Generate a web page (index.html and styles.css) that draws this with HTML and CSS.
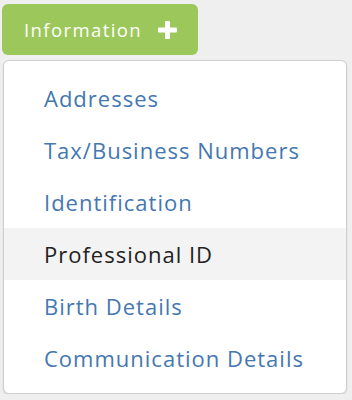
FILE: index.html
```html
<!DOCTYPE html>
<html lang="en">
<head>
  <meta charset="UTF-8" />
  <title>Information menu</title>
  <link rel="stylesheet" href="styles.css">
</head>
<body>
  <div class="dropdown">
    <button class="toggle">
      Information
      <svg class="plus" width="19" height="18" viewBox="0 0 19 18">
        <rect x="7" y="0" width="5" height="18" rx="1" fill="#fff" />
        <rect x="0" y="6.5" width="19" height="5" rx="1" fill="#fff" />
      </svg>
    </button>
    <ul class="menu">
      <li><a href="#">Addresses</a></li>
      <li><a href="#">Tax/Business Numbers</a></li>
      <li><a href="#">Identification</a></li>
      <li class="active"><a href="#">Professional ID</a></li>
      <li><a href="#">Birth Details</a></li>
      <li><a href="#">Communication Details</a></li>
    </ul>
  </div>
</body>
</html>
```

FILE: styles.css
```css
body {
  margin: 0;
  background: #efefef;
  font-family: 'Open Sans', 'Liberation Sans', sans-serif;
}
.dropdown {
  padding: 4px 5px 0 2px;
  display: flex;
  flex-direction: column;
  align-items: flex-start;
  gap: 5px;
}
.toggle {
  display: flex;
  align-items: center;
  gap: 16px;
  width: 196px;
  height: 51px;
  padding: 0 0 0 22px;
  border: none;
  border-radius: 6px;
  background: #9cc75a;
  color: #fff;
  font-family: inherit;
  font-size: 18.5px;
  letter-spacing: 1.4px;
  cursor: pointer;
}
.menu {
  list-style: none;
  margin: 0 0 0 1px;
  padding: 11px 0 9px;
  width: 342px;
  background: #fff;
  border: 1px solid #cfcfcf;
  border-radius: 6px;
  box-shadow: 0 1px 2px rgba(0,0,0,0.12);
}
.menu li {
  height: 52px;
  display: flex;
  align-items: center;
  padding-left: 40px;
}
.menu a {
  color: #4577b1;
  text-decoration: none;
  font-size: 22px;
  letter-spacing: 1px;
}
.menu li.active {
  background: #f3f3f3;
}
.menu li.active a {
  color: #222;
}
```
